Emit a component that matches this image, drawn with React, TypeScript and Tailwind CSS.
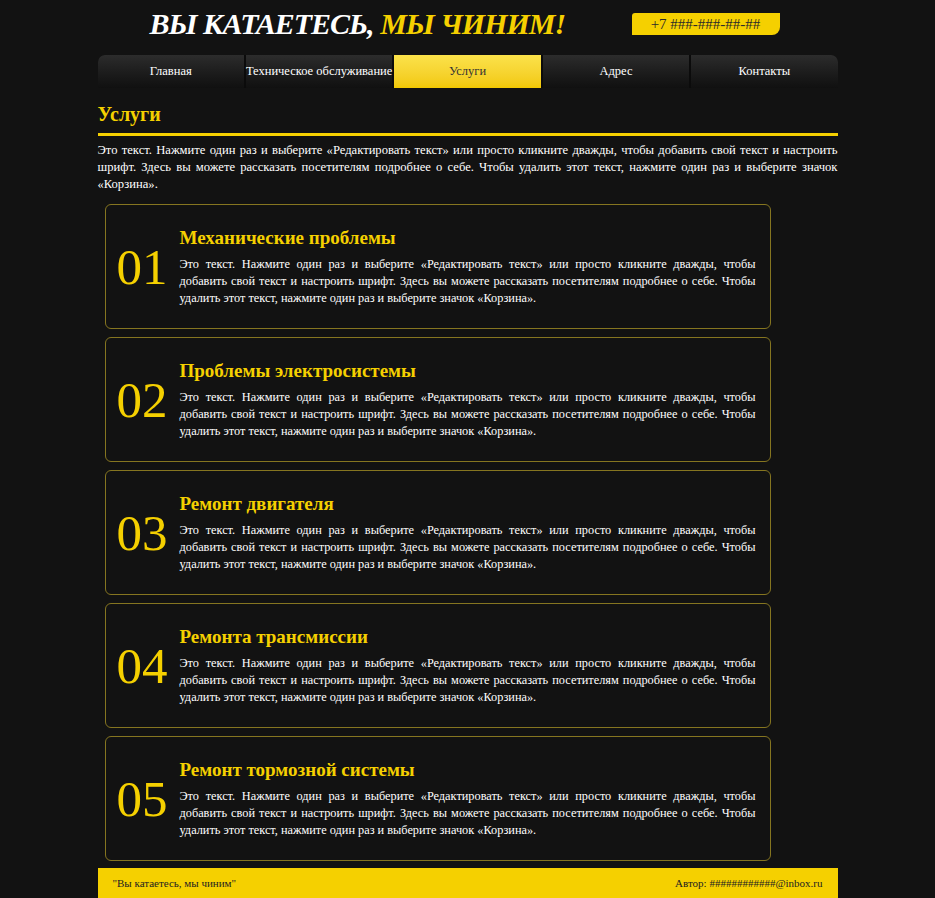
import React from 'react';

const navItems = ['Главная', 'Техническое обслуживание', 'Услуги', 'Адрес', 'Контакты'];

const loremText =
  'Это текст. Нажмите один раз и выберите «Редактировать текст» или просто кликните дважды, чтобы добавить свой текст и настроить шрифт. Здесь вы можете рассказать посетителям подробнее о себе. Чтобы удалить этот текст, нажмите один раз и выберите значок «Корзина».';

const services = [
  { num: '01', title: 'Механические проблемы' },
  { num: '02', title: 'Проблемы электросистемы' },
  { num: '03', title: 'Ремонт двигателя' },
  { num: '04', title: 'Ремонта трансмиссии' },
  { num: '05', title: 'Ремонт тормозной системы' },
];

export default function App() {
  return (
    <div
      className="min-h-screen bg-[#121212] text-white"
      style={{ fontFamily: '"Liberation Serif", "Times New Roman", serif' }}
    >
      <div className="mx-auto w-[740px]">
        {/* Header */}
        <header className="flex h-[55px] items-start pt-[6px]">
          <h1 className="ml-[52px] text-[30px] font-bold italic leading-[36px] tracking-[-1px]">
            ВЫ КАТАЕТЕСЬ, <span className="text-[#f5d000]">МЫ ЧИНИМ!</span>
          </h1>
          <div className="ml-auto mr-[58px] mt-[7px] flex h-[22px] w-[148px] items-center justify-center rounded-tl-[3px] rounded-br-[8px] bg-[#f5d000] text-[15px] text-[#2a2a2a]">
            +7 ###-###-##-##
          </div>
        </header>

        {/* Navigation */}
        <nav className="flex h-[33px] gap-[2px] overflow-hidden rounded-t-[7px] bg-[#0b0b0b]">
          {navItems.map((item, i) => (
            <div
              key={item}
              className={
                i === 2
                  ? 'flex flex-1 items-center justify-center whitespace-nowrap bg-gradient-to-b from-[#fbe24a] to-[#f2c800] text-[12.5px] text-[#333]'
                  : 'flex flex-1 items-center justify-center whitespace-nowrap bg-gradient-to-b from-[#2c2c2c] to-[#101010] text-[12.5px] text-white'
              }
            >
              {item}
            </div>
          ))}
        </nav>

        {/* Section title */}
        <h2 className="mt-[15px] text-[20px] font-bold leading-[22px] text-[#f5d000]">Услуги</h2>
        <div className="mt-[8px] h-[3px] bg-[#f5d000]" />
        <p className="mt-[6px] text-justify text-[12.6px] leading-[17px]">{loremText}</p>

        {/* Service cards */}
        <div className="mt-[11px] flex w-[666px] flex-col gap-[8px] pl-[7px] box-content">
          {services.map((s) => (
            <div
              key={s.num}
              className="flex h-[125px] items-center rounded-[6px] border border-[#857520] pl-[11px] pr-[14px]"
            >
              <div className="mt-[2px] w-[63px] shrink-0 text-[51px] leading-none text-[#f5d000]">{s.num}</div>
              <div className="flex-1">
                <h3 className="text-[19px] font-bold leading-[24px] text-[#f5d000]">{s.title}</h3>
                <p className="mt-[6px] text-justify text-[12.3px] leading-[17px]">{loremText}</p>
              </div>
            </div>
          ))}
        </div>

        {/* Footer */}
        <footer className="mt-[7px] flex h-[30px] items-center justify-between bg-[#f5d000] px-[15px] text-[11px] text-[#222]">
          <span>"Вы катаетесь, мы чиним"</span>
          <span>Автор: ############@inbox.ru</span>
        </footer>
      </div>
    </div>
  );
}
